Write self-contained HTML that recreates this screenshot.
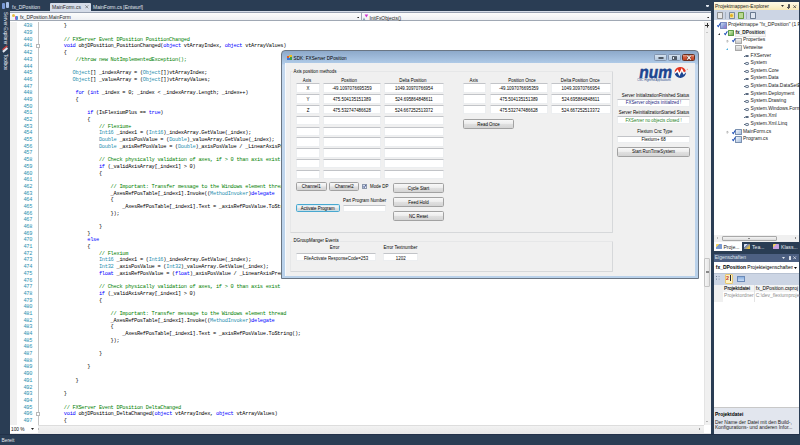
<!DOCTYPE html>
<html><head><meta charset="utf-8">
<style>
*{box-sizing:border-box;margin:0;padding:0}
html,body{width:800px;height:445px;overflow:hidden;background:#2a3d54;font-family:"Liberation Sans",sans-serif}
.a{position:absolute}
b{font-weight:normal}
.txt{white-space:pre;line-height:1}
/* editor */
#editor{left:10px;top:10.5px;width:700.5px;height:423.3px;background:#fff;overflow:hidden}
#code div,#nums div{height:6.70px}
#code{left:30.4px;top:12.9px;font-family:"Liberation Mono",monospace;font-size:5.3px;letter-spacing:-0.253px;line-height:6.70px;white-space:pre;color:#000}
#nums{left:3px;top:12.9px;width:19.2px;text-align:right;font-family:"Liberation Mono",monospace;font-size:5.3px;letter-spacing:-0.253px;line-height:6.70px;color:#2b91af}
.k{color:#0000ff}.t{color:#2b91af}.c{color:#008000}
/* dialog */
#dlg{left:281px;top:50px;width:417px;height:229.5px;background:linear-gradient(#8da9ca,#b0cbe8 12px,#b9d3ee);border:1px solid #6d7f95;border-radius:5px 5px 0 0}
#client{left:3px;top:12.5px;width:409px;height:213.5px;background:#f0f0f0;border:1px solid #9db3cc}
.tb{position:absolute;background:#fff;border:0.5px solid #eceef0;border-top:0.8px solid #c2c4c8;font-size:4.42px;text-align:center;white-space:pre;color:#000}
.lbl{position:absolute;font-size:4.42px;white-space:pre;line-height:5px;color:#000}
.btn{position:absolute;border:0.7px solid #a2a2a2;border-radius:1.6px;background:linear-gradient(#f8f8f8 0,#ededed 45%,#dfdfdf 55%,#d4d4d4 100%);padding-top:0.7px;font-size:4.42px;text-align:center;white-space:pre;color:#000}
.gb{position:absolute;border:0.5px solid #e6e7e8;border-right-color:#d6d8da;border-bottom-color:#d6d8da;border-radius:1px}
</style></head><body>
<!-- left sidebar -->
<div class="a txt" style="left:2.4px;top:12px;font-size:4.7px;color:#e8ecf4;writing-mode:vertical-rl">Server-Explorer</div>
<div class="a txt" style="left:2.4px;top:54px;font-size:4.7px;color:#e8ecf4;writing-mode:vertical-rl">Toolbox</div>
<div class="a" style="left:2px;top:3px;width:3px;height:6px;background:#7a9ad8;border-radius:1px"></div>
<div class="a" style="left:5.5px;top:2px;width:3px;height:6px;background:#a8c0e8;border-radius:1px"></div>
<div class="a" style="left:2px;top:47px;width:6px;height:2px;background:#c04040;transform:rotate(-40deg)"></div>
<div class="a" style="left:2px;top:49px;width:6px;height:1.5px;background:#e0e6f0;transform:rotate(-40deg)"></div>
<!-- tabs -->
<div class="a txt" style="left:12px;top:5px;font-size:5px;color:#e0e6ee">fx_DPosition</div>
<div class="a" style="left:50px;top:2.6px;width:41px;height:9px;background:#d5dce8;border-radius:1px 1px 0 0"></div>
<div class="a txt" style="left:52px;top:5px;font-size:5px;color:#2a2a2a">MainForm.cs</div>
<svg class="a" style="left:85.1px;top:5.3px" width="3.6" height="3.6" viewBox="0 0 3.6 3.6"><path d="M0.3 0.3 L3.3 3.3 M3.3 0.3 L0.3 3.3" stroke="#5a5a5a" stroke-width="0.6"/></svg>
<div class="a txt" style="left:93px;top:5px;font-size:5px;color:#e0e6ee">MainForm.cs [Entwurf]</div>
<svg class="a" style="left:705.70px;top:5.70px" width="3" height="1.8" viewBox="0 0 3 1.8"><path d="M0 0 L3 0 L1.5 1.8 Z" fill="#e0e6ee"/></svg><div class="a" style="left:705.7px;top:4.6px;width:3px;height:0.5px;background:#e0e6ee"></div>

<div id="editor" class="a">
  <div class="a" style="left:0;top:0;width:700.5px;height:1.5px;background:#d5dce8"></div>
  <div class="a" style="left:0;top:1.2px;width:700.5px;height:9.8px;background:linear-gradient(#fdfdfd,#eef0f3);border-top:1px solid #9aa3b3;border-bottom:1px solid #a0a8b4"></div>
  <div class="a" style="left:350.6px;top:1.5px;width:0.8px;height:9px;background:#a0a8b4"></div>
  <div class="a txt" style="left:10px;top:5.9px;font-size:4.9px;color:#1a1a1a">fx_DPosition.MainForm</div>
  <div class="a" style="left:2.3px;top:3.3px;width:3px;height:3px;background:#e8c040;border-radius:50%"></div>
  <div class="a" style="left:4.6px;top:5.3px;width:3.6px;height:4.2px;background:linear-gradient(90deg,#c050c0 50%,#4a8ad8 50%);border-radius:1px"></div>
  <svg class="a" style="left:346.60px;top:6.15px" width="2.6" height="1.5" viewBox="0 0 2.6 1.5"><path d="M0 0 L2.6 0 L1.3 1.5 Z" fill="#222"/></svg>
  <svg class="a" style="left:352px;top:3.2px" width="7" height="7" viewBox="0 0 7 7"><path d="M0.5 6.5 L2 3.5 L3.5 6.5 Z" fill="#8aa0b0"/><path d="M2.6 0.6 L6.2 0.6 L4.4 3.6 Z" fill="#d030d0"/></svg>
  <div class="a txt" style="left:359.4px;top:6.1px;font-size:4.9px;color:#1a1a1a">InitFxObjects()</div>
  <svg class="a" style="left:696.50px;top:6.15px" width="2.6" height="1.5" viewBox="0 0 2.6 1.5"><path d="M0 0 L2.6 0 L1.3 1.5 Z" fill="#222"/></svg>
  <!-- margins -->
  <div class="a" style="left:0;top:11px;width:6.5px;height:404px;background:#f0f0f0"></div>
  <div class="a" style="left:28px;top:11px;width:0.6px;height:403px;background:#c4c4c4"></div>
  <div class="a" style="left:26.2px;top:33.4px;width:4.2px;height:4.2px;border:0.6px solid #b8b8b8;background:#fff"></div>
  <div class="a" style="left:26.2px;top:401px;width:4.2px;height:4.2px;border:0.6px solid #b8b8b8;background:#fff"></div>
  <div id="nums" class="a"><div>438</div><div>439</div><div>440</div><div>441</div><div>442</div><div>443</div><div>444</div><div>445</div><div>446</div><div>447</div><div>448</div><div>449</div><div>450</div><div>451</div><div>452</div><div>453</div><div>454</div><div>455</div><div>456</div><div>457</div><div>458</div><div>459</div><div>460</div><div>461</div><div>462</div><div>463</div><div>464</div><div>465</div><div>466</div><div>467</div><div>468</div><div>469</div><div>470</div><div>471</div><div>472</div><div>473</div><div>474</div><div>475</div><div>476</div><div>477</div><div>478</div><div>479</div><div>480</div><div>481</div><div>482</div><div>483</div><div>484</div><div>485</div><div>486</div><div>487</div><div>488</div><div>489</div><div>490</div><div>491</div><div>492</div><div>493</div><div>494</div><div>495</div><div>496</div><div>497</div></div>
  <div id="code" class="a"><div>        }</div><div></div><div>        <b class=c>// FXServer Event DPosition PositionChanged</b></div><div>        <b class=k>void</b> objDPosition_PositionChanged(<b class=k>object</b> vtArrayIndex, <b class=k>object</b> vtArrayValues)</div><div>        {</div><div>            <b class=c>//throw new NotImplementedException();</b></div><div></div><div>           <b class=t>Object</b>[] _indexArray = (<b class=t>Object</b>[])vtArrayIndex;</div><div>           <b class=t>Object</b>[] _valueArray = (<b class=t>Object</b>[])vtArrayValues;</div><div></div><div>            <b class=k>for</b> (<b class=k>int</b> _index = 0; _index &lt; _indexArray.Length; _index++)</div><div>            {</div><div></div><div>                <b class=k>if</b> (IsFlexiumPlus == <b class=k>true</b>)</div><div>                {</div><div>                    <b class=c>// Flexium+</b></div><div>                    <b class=t>Int16</b> _index1 = (<b class=t>Int16</b>)_indexArray.GetValue(_index);</div><div>                    <b class=t>Double</b> _axisPosValue = (<b class=t>Double</b>)_valueArray.GetValue(_index);</div><div>                    <b class=t>Double</b> _axisRefPosValue = (<b class=t>Double</b>)_axisPosValue / _LinearAxisPrecision;</div><div></div><div>                    <b class=c>// Check physically validation of axes, if &gt; 0 than axis exist</b></div><div>                    <b class=k>if</b> (_validAxisArray[_index1] &gt; 0)</div><div>                    {</div><div></div><div>                        <b class=c>// Important: Transfer message to the Windows element thread</b></div><div>                        _AxesRefPosTable[_index1].Invoke((<b class=t>MethodInvoker</b>)<b class=k>delegate</b></div><div>                        {</div><div>                            _AxesRefPosTable[_index1].Text = _axisRefPosValue.ToString();</div><div>                        });</div><div></div><div>                    }</div><div>                }</div><div>                <b class=k>else</b></div><div>                {</div><div>                    <b class=c>// Flexium</b></div><div>                    <b class=t>Int16</b> _index1 = (<b class=t>Int16</b>)_indexArray.GetValue(_index);</div><div>                    <b class=t>Int32</b> _axisPosValue = (<b class=t>Int32</b>)_valueArray.GetValue(_index);</div><div>                    <b class=k>float</b> _axisRefPosValue = (<b class=k>float</b>)_axisPosValue / _LinearAxisPrecision;</div><div></div><div>                    <b class=c>// Check physically validation of axes, if &gt; 0 than axis exist</b></div><div>                    <b class=k>if</b> (_validAxisArray[_index1] &gt; 0)</div><div>                    {</div><div></div><div>                        <b class=c>// Important: Transfer message to the Windows element thread</b></div><div>                        _AxesRefPosTable[_index1].Invoke((<b class=t>MethodInvoker</b>)<b class=k>delegate</b></div><div>                        {</div><div>                            _AxesRefPosTable[_index1].Text = _axisRefPosValue.ToString();</div><div>                        });</div><div></div><div>                    }</div><div></div><div>                }</div><div></div><div>            }</div><div></div><div>        }</div><div></div><div>        <b class=c>// FXServer Event DPosition DeltaChanged</b></div><div>        <b class=k>void</b> objDPosition_DeltaChanged(<b class=k>object</b> vtArrayIndex, <b class=k>object</b> vtArrayValues)</div><div>        {</div></div>
  <!-- vscroll -->
  <div class="a" style="left:693.5px;top:11px;width:7px;height:404px;background:#f0f0f0;border-left:0.5px solid #e4e4e4"></div>
  <div class="a" style="left:695.2px;top:14.1px;width:4.2px;height:1px;background:#333"></div><div class="a" style="left:696.8px;top:12.2px;width:1px;height:4.6px;background:#333"></div><div class="a" style="left:696.6px;top:16.4px;width:1.4px;height:1.2px;background:#333;border-radius:50%"></div>
  <svg class="a" style="left:696.30px;top:21.60px" width="2" height="1.2" viewBox="0 0 2 1.2"><path d="M0 1.2 L2 1.2 L1.0 0 Z" fill="#8a8a8a"/></svg>
  <svg class="a" style="left:696.30px;top:410.00px" width="2" height="1.2" viewBox="0 0 2 1.2"><path d="M0 0 L2 0 L1.0 1.2 Z" fill="#8a8a8a"/></svg>
  <div class="a" style="left:694.4px;top:247.2px;width:5.8px;height:29.8px;background:linear-gradient(90deg,#f4f4f4,#e6e6e6);border:0.6px solid #c4c4c4;border-radius:1px"></div>
  <div class="a" style="left:695.8px;top:260.4px;width:3px;height:2.6px;border-top:0.5px solid #888;border-bottom:0.5px solid #888"></div>
  <!-- hscroll/zoom -->
  <div class="a" style="left:0;top:414.5px;width:700.5px;height:8.8px;background:linear-gradient(#f2f2f2,#e8e8e8);border-top:0.5px solid #ddd"></div>
  <div class="a" style="left:0;top:414.5px;width:28px;height:8px;background:#fff"></div>
  <div class="a txt" style="left:1px;top:417.2px;font-size:4.8px;color:#111">100 %</div>
  <svg class="a" style="left:21.10px;top:417.90px" width="3" height="2" viewBox="0 0 3 2"><path d="M0 0 L3 0 L1.5 2 Z" fill="#222"/></svg>
  <svg class="a" style="left:28.00px;top:417.60px" width="1.2" height="2" viewBox="0 0 1.2 2"><path d="M1.2 0 L1.2 2 L0 1.0 Z" fill="#666"/></svg>
  <div class="a" style="left:693.5px;top:414.5px;width:7px;height:8px;background:#fff"></div>
  <svg class="a" style="left:689.40px;top:417.60px" width="1.2" height="2" viewBox="0 0 1.2 2"><path d="M0 0 L0 2 L1.2 1.0 Z" fill="#666"/></svg>
</div>

<!-- Solution explorer -->
<div class="a" style="left:713.5px;top:2.4px;width:85.5px;height:238.2px;background:#fff">
  <div class="a" style="left:0;top:0;width:85.5px;height:7.8px;background:linear-gradient(#fffbe8,#f7e9b8)"></div>
  <div class="a txt" style="left:1.5px;top:1.6px;font-size:5px;color:#1a1a1a">Projektmappen-Explorer</div>
  <svg class="a" style="left:67.50px;top:3.10px" width="3" height="2" viewBox="0 0 3 2"><path d="M0 0 L3 0 L1.5 2 Z" fill="#333"/></svg>
  <div class="a" style="left:74px;top:1.9px;width:2px;height:3.4px;border:0.5px solid #555;border-radius:0.4px"></div><div class="a" style="left:73.3px;top:4.6px;width:3.4px;height:0.5px;background:#555"></div><div class="a" style="left:74.8px;top:5px;width:0.5px;height:1.4px;background:#555"></div>
  <svg class="a" style="left:79.90px;top:2.30px" width="3.4" height="3.4" viewBox="0 0 3.4 3.4"><path d="M0.3 0.3 L3.1 3.1 M3.1 0.3 L0.3 3.1" stroke="#333" stroke-width="0.7"/></svg>
  <div class="a" style="left:0;top:7.8px;width:85.5px;height:10.3px;background:#ccd5e4"></div>
  <div class="a" style="left:3.2px;top:10px;width:6px;height:6.2px;background:#e8e8e8;border:0.6px solid #909090;border-radius:0.8px"></div>
<div class="a" style="left:15.4px;top:10px;width:6px;height:6.2px;background:#f0e0a0;border:0.6px solid #7a8aa0;border-radius:0.8px"></div>
<div class="a" style="left:24.1px;top:10px;width:6px;height:6.2px;background:#b8d890;border:0.6px solid #6a9a40;border-radius:0.8px"></div>
<div class="a" style="left:36.3px;top:10px;width:6px;height:6.2px;background:#dfe6f0;border:0.6px solid #6a7a90;border-radius:0.8px"></div>
<div class="a" style="left:11.5px;top:9.6px;width:0.5px;height:7px;background:#a8b4c4"></div>
<div class="a" style="left:32.5px;top:9.6px;width:0.5px;height:7px;background:#a8b4c4"></div>
<div class="a" style="left:16.2px;top:11.5px;width:3px;height:3px;border-radius:50%;background:#e0b020"></div>
<div class="a txt" style="left:14.5px;top:20.9px;font-size:4.9px;color:#1a1a1a;">Projektmappe "fx_DPosition" (1 Projekt)</div>
<div class="a" style="left:6.7px;top:20.0px;width:6.6px;height:6.2px;background:linear-gradient(135deg,#c8d8f0,#8a9ad8 60%,#b070c0);border:0.4px solid #7a8ac0;border-radius:0.6px"></div>
<svg class="a" style="left:3.30px;top:20.80px;overflow:visible" width="3.6" height="4.0" viewBox="0 0 3.6 4"><path d="M0.3 2.3 L1.3 3.5 L3.4 0.3" fill="none" stroke="#1e4fb8" stroke-width="1.1"/></svg>
<div class="a" style="left:21.2px;top:27.4px;width:31px;height:7px;background:#f6f6f6;border:0.5px solid #e8e8e8"></div>
<div class="a txt" style="left:22px;top:28.5px;font-size:4.75px;color:#1a1a1a;font-weight:bold;">fx_DPosition</div>
<div class="a" style="left:14.2px;top:27.6px;width:6.6px;height:6.2px;background:linear-gradient(135deg,#d8f0c0,#70b050);border:0.4px solid #5a9a4a;border-radius:0.6px"></div>
<svg class="a" style="left:10.80px;top:28.40px;overflow:visible" width="3.6" height="4.0" viewBox="0 0 3.6 4"><path d="M0.3 2.3 L1.3 3.5 L3.4 0.3" fill="none" stroke="#1e4fb8" stroke-width="1.1"/></svg>
<svg class="a" style="left:4.40px;top:30.20px" width="2" height="2" viewBox="0 0 2 2"><path d="M2 0 L2 2 L0 2 Z" fill="#333"/></svg>
<div class="a txt" style="left:29.5px;top:36.1px;font-size:4.9px;color:#1a1a1a;">Properties</div>
<div class="a" style="left:21.7px;top:35.2px;width:6.6px;height:6.2px;background:linear-gradient(#f0f0f0,#c8c8c8);border:0.4px solid #a8a8a8;border-radius:0.6px"></div>
<svg class="a" style="left:18.30px;top:36.00px;overflow:visible" width="3.6" height="4.0" viewBox="0 0 3.6 4"><path d="M0.3 2.3 L1.3 3.5 L3.4 0.3" fill="none" stroke="#1e4fb8" stroke-width="1.1"/></svg>
<svg class="a" style="left:13.60px;top:37.40px;overflow:visible" width="1.4" height="2.4" viewBox="0 0 1.4 2.4"><path d="M0 0 L0 2.4 L1.4 1.2 Z" fill="none" stroke="#8a8a8a" stroke-width="0.5"/></svg>
<div class="a txt" style="left:29.5px;top:43.7px;font-size:4.9px;color:#1a1a1a;">Verweise</div>
<div class="a" style="left:21.7px;top:42.8px;width:6.6px;height:6.2px;background:linear-gradient(#f0f0f0,#c8c8c8);border:0.4px solid #a8a8a8;border-radius:0.6px"></div>
<svg class="a" style="left:12.90px;top:45.40px" width="2" height="2" viewBox="0 0 2 2"><path d="M2 0 L2 2 L0 2 Z" fill="#4ab0e0"/></svg>
<div class="a txt" style="left:37px;top:51.3px;font-size:4.9px;color:#1a1a1a;">FXServer</div>
<div class="a" style="left:31.8px;top:52.5px;width:4.2px;height:2.6px;border:0.6px solid #5a6a80;border-radius:1.2px;background:#dfe8f2"></div>
<div class="a" style="left:30.4px;top:53.5px;width:1.6px;height:0.6px;background:#5a6a80"></div>
<div class="a txt" style="left:37px;top:58.9px;font-size:4.9px;color:#1a1a1a;">System</div>
<div class="a" style="left:31.8px;top:60.1px;width:4.2px;height:2.6px;border:0.6px solid #5a6a80;border-radius:1.2px;background:#dfe8f2"></div>
<div class="a" style="left:30.4px;top:61.1px;width:1.6px;height:0.6px;background:#5a6a80"></div>
<div class="a txt" style="left:37px;top:66.5px;font-size:4.9px;color:#1a1a1a;">System.Core</div>
<div class="a" style="left:31.8px;top:67.7px;width:4.2px;height:2.6px;border:0.6px solid #5a6a80;border-radius:1.2px;background:#dfe8f2"></div>
<div class="a" style="left:30.4px;top:68.7px;width:1.6px;height:0.6px;background:#5a6a80"></div>
<div class="a txt" style="left:37px;top:74.1px;font-size:4.9px;color:#1a1a1a;">System.Data</div>
<div class="a" style="left:31.8px;top:75.3px;width:4.2px;height:2.6px;border:0.6px solid #5a6a80;border-radius:1.2px;background:#dfe8f2"></div>
<div class="a" style="left:30.4px;top:76.3px;width:1.6px;height:0.6px;background:#5a6a80"></div>
<div class="a txt" style="left:37px;top:81.7px;font-size:4.9px;color:#1a1a1a;">System.Data.DataSetExtensions</div>
<div class="a" style="left:31.8px;top:82.9px;width:4.2px;height:2.6px;border:0.6px solid #5a6a80;border-radius:1.2px;background:#dfe8f2"></div>
<div class="a" style="left:30.4px;top:83.9px;width:1.6px;height:0.6px;background:#5a6a80"></div>
<div class="a txt" style="left:37px;top:89.3px;font-size:4.9px;color:#1a1a1a;">System.Deployment</div>
<div class="a" style="left:31.8px;top:90.5px;width:4.2px;height:2.6px;border:0.6px solid #5a6a80;border-radius:1.2px;background:#dfe8f2"></div>
<div class="a" style="left:30.4px;top:91.5px;width:1.6px;height:0.6px;background:#5a6a80"></div>
<div class="a txt" style="left:37px;top:96.9px;font-size:4.9px;color:#1a1a1a;">System.Drawing</div>
<div class="a" style="left:31.8px;top:98.1px;width:4.2px;height:2.6px;border:0.6px solid #5a6a80;border-radius:1.2px;background:#dfe8f2"></div>
<div class="a" style="left:30.4px;top:99.1px;width:1.6px;height:0.6px;background:#5a6a80"></div>
<div class="a txt" style="left:37px;top:104.5px;font-size:4.9px;color:#1a1a1a;">System.Windows.Forms</div>
<div class="a" style="left:31.8px;top:105.7px;width:4.2px;height:2.6px;border:0.6px solid #5a6a80;border-radius:1.2px;background:#dfe8f2"></div>
<div class="a" style="left:30.4px;top:106.7px;width:1.6px;height:0.6px;background:#5a6a80"></div>
<div class="a txt" style="left:37px;top:112.1px;font-size:4.9px;color:#1a1a1a;">System.Xml</div>
<div class="a" style="left:31.8px;top:113.3px;width:4.2px;height:2.6px;border:0.6px solid #5a6a80;border-radius:1.2px;background:#dfe8f2"></div>
<div class="a" style="left:30.4px;top:114.3px;width:1.6px;height:0.6px;background:#5a6a80"></div>
<div class="a txt" style="left:37px;top:119.7px;font-size:4.9px;color:#1a1a1a;">System.Xml.Linq</div>
<div class="a" style="left:31.8px;top:120.9px;width:4.2px;height:2.6px;border:0.6px solid #5a6a80;border-radius:1.2px;background:#dfe8f2"></div>
<div class="a" style="left:30.4px;top:121.9px;width:1.6px;height:0.6px;background:#5a6a80"></div>
<div class="a txt" style="left:29.5px;top:127.3px;font-size:4.9px;color:#1a1a1a;">MainForm.cs</div>
<div class="a" style="left:21.7px;top:126.4px;width:6.6px;height:6.2px;background:linear-gradient(135deg,#f0f4fa,#a8c0e0);border:0.4px solid #7a90b0;border-radius:0.6px"></div>
<svg class="a" style="left:18.30px;top:127.20px;overflow:visible" width="3.6" height="4.0" viewBox="0 0 3.6 4"><path d="M0.3 2.3 L1.3 3.5 L3.4 0.3" fill="none" stroke="#1e4fb8" stroke-width="1.1"/></svg>
<svg class="a" style="left:13.60px;top:128.60px;overflow:visible" width="1.4" height="2.4" viewBox="0 0 1.4 2.4"><path d="M0 0 L0 2.4 L1.4 1.2 Z" fill="none" stroke="#8a8a8a" stroke-width="0.5"/></svg>
<div class="a txt" style="left:29.5px;top:134.9px;font-size:4.9px;color:#1a1a1a;">Program.cs</div>
<div class="a" style="left:21.7px;top:134.0px;width:6.6px;height:6.2px;background:linear-gradient(135deg,#f0f4fa,#a8c0e0);border:0.4px solid #7a90b0;border-radius:0.6px"></div>
<svg class="a" style="left:18.30px;top:134.80px;overflow:visible" width="3.6" height="4.0" viewBox="0 0 3.6 4"><path d="M0.3 2.3 L1.3 3.5 L3.4 0.3" fill="none" stroke="#1e4fb8" stroke-width="1.1"/></svg>
  <div class="a" style="left:0;top:232.9px;width:85.5px;height:6.5px;background:#f0f0f0"></div>
  <div class="a" style="left:8.1px;top:233.5px;width:55.2px;height:5.2px;background:linear-gradient(#f4f4f4,#dcdcdc);border:0.5px solid #a8a8a8;border-radius:1px"></div>
  <div class="a" style="left:34px;top:235.2px;width:2.4px;height:1.8px;border-left:0.4px solid #888;border-right:0.4px solid #888"></div>
  <svg class="a" style="left:3.00px;top:235.10px" width="1.2" height="2" viewBox="0 0 1.2 2"><path d="M1.2 0 L1.2 2 L0 1.0 Z" fill="#555"/></svg>
  <svg class="a" style="left:81.20px;top:235.10px" width="1.2" height="2" viewBox="0 0 1.2 2"><path d="M0 0 L0 2 L1.2 1.0 Z" fill="#555"/></svg>
</div>
<!-- tool tabs -->
<div class="a" style="left:714px;top:241.6px;width:27.8px;height:9.6px;background:#fff"></div>
<div class="a txt" style="left:723.4px;top:244.6px;font-size:5.1px;color:#1a1a1a">Proje...</div>
<div class="a" style="left:715.6px;top:243.6px;width:6px;height:5px;background:linear-gradient(135deg,#f0d060 30%,#7a9ad0 30%);border-radius:0.5px"></div>
<div class="a txt" style="left:752px;top:244.6px;font-size:5.1px;color:#e8ecf2">Tea...</div>
<div class="a" style="left:744.2px;top:243.6px;width:6px;height:5.6px;background:linear-gradient(135deg,#d8e0f0 30%,#5a7acc 30%,#e8c040 80%);border-radius:0.5px"></div>
<div class="a txt" style="left:781px;top:244.6px;font-size:5.1px;color:#e8ecf2">Klass...</div>
<div class="a" style="left:773.4px;top:243.6px;width:6px;height:5px;background:linear-gradient(135deg,#f0d060 30%,#c8a0e0 30%);border-radius:0.5px"></div>
<!-- Properties -->
<div class="a" style="left:713.5px;top:254.3px;width:85.5px;height:179.4px;background:#fff">
  <div class="a" style="left:0;top:0;width:85.5px;height:7.4px;background:#4d6082"></div>
  <div class="a txt" style="left:1.3px;top:1.4px;font-size:4.95px;color:#dfe4ec">Eigenschaften</div>
  <svg class="a" style="left:68.00px;top:2.90px" width="3" height="2" viewBox="0 0 3 2"><path d="M0 0 L3 0 L1.5 2 Z" fill="#e6eaf0"/></svg>
  <div class="a" style="left:75.8px;top:1.8px;width:1.8px;height:3.6px;border:0.5px solid #dfe4ec;border-radius:0.5px"></div>
  <svg class="a" style="left:79.90px;top:2.20px" width="3.4" height="3.4" viewBox="0 0 3.4 3.4"><path d="M0.3 0.3 L3.1 3.1 M3.1 0.3 L0.3 3.1" stroke="#e6eaf0" stroke-width="0.7"/></svg>
  <div class="a txt" style="left:2.3px;top:11.6px;font-size:4.95px;color:#000"><b style="font-weight:bold">fx_DPosition</b> Projekteigenschaften</div>
  <div class="a" style="left:79.5px;top:10.6px;width:6px;height:7px;background:#fff"></div>
  <svg class="a" style="left:80.30px;top:13.20px" width="3" height="2" viewBox="0 0 3 2"><path d="M0 0 L3 0 L1.5 2 Z" fill="#000"/></svg>
  <div class="a" style="left:0;top:18.6px;width:85.5px;height:11.7px;background:#ccd5e4;border-top:0.5px solid #b8c2d2"></div>
  <div class="a" style="left:2.8px;top:21.5px;width:1.2px;height:1.2px;background:#6a7a90;box-shadow:0 2.6px 0 #6a7a90,2.6px 0 0 #8a9ab0,2.6px 2.6px 0 #8a9ab0"></div>
  <div class="a" style="left:11.2px;top:19.8px;width:8.6px;height:9.6px;background:#fdf2c4;border:0.6px solid #e8c870;border-radius:1px"></div>
  <div class="a txt" style="left:12.6px;top:21.4px;font-size:5.4px;color:#c03030;font-weight:bold">2</div>
  <div class="a" style="left:16.4px;top:21.2px;width:0.8px;height:6px;background:#2a2a2a"></div>
  <div class="a" style="left:23.6px;top:21.6px;width:8px;height:6.4px;background:linear-gradient(#8ab0e0,#c8dcf4);border:0.6px solid #6a8ab8"></div>
  <div class="a" style="left:0;top:30.3px;width:9.5px;height:17px;background:#f0f0f0"></div>
  <div class="a" style="left:9.5px;top:30.3px;width:76px;height:7.4px;background:#f4f4f4"></div>
  <div class="a txt" style="left:10.6px;top:32.4px;font-size:4.95px;color:#1a1a1a;-webkit-text-stroke:0.15px #1a1a1a">Projektdatei</div>
  <div class="a txt" style="left:10.6px;top:40.1px;font-size:4.95px;color:#8c8c8c">Projektordner</div>
  <div class="a txt" style="left:42.3px;top:32.4px;font-size:4.95px;color:#000">fx_DPosition.csproj</div>
  <div class="a txt" style="left:42.3px;top:40.1px;font-size:4.95px;color:#8c8c8c">C:\dev_flexiumproject</div>
  <div class="a" style="left:40.6px;top:30.3px;width:0.5px;height:17px;background:#e4e4e4"></div>
  <div class="a" style="left:0;top:153.2px;width:85.5px;height:26.2px;background:#e2e6ee;border-top:1.3px solid #c8c8c8"></div>
  <div class="a txt" style="left:1.5px;top:158.4px;font-size:4.95px;color:#000;font-weight:bold">Projektdatei</div>
  <div class="a txt" style="left:1.5px;top:166.4px;font-size:4.95px;color:#222">Der Name der Datei mit den Build-,</div>
  <div class="a txt" style="left:1.5px;top:172.2px;font-size:4.95px;color:#222">Konfigurations- und anderen Infor...</div>
</div>
<div class="a" style="left:0;top:433.8px;width:800px;height:1.2px;background:#223149"></div>
<div class="a txt" style="left:1.5px;top:438.6px;font-size:4.9px;color:#e6eaf0">Bereit</div>

<div class="a" style="left:281px;top:50.2px;width:418px;height:229px;background:linear-gradient(#8da9ca,#b0cbe8 12.5px,#c4d8ee 14px,#b9d1ea);border:0.7px solid #6a7684;border-radius:4px 4px 0 0"></div>
<div class="a" style="left:284.8px;top:62.6px;width:410.4px;height:213.3px;background:#f0f0f0;border-left:0.5px solid #f8fafc"></div>
<div class="a" style="left:287px;top:55.5px;width:2.2px;height:2.2px;background:#e05a2a"></div><div class="a" style="left:289.4px;top:55px;width:2.2px;height:2.2px;background:#f0c020"></div><div class="a" style="left:287.4px;top:57.8px;width:2.2px;height:2.2px;background:#3a7ad8"></div><div class="a" style="left:289.6px;top:57.4px;width:2.2px;height:2.2px;background:#40a040"></div>
<div class="lbl" style="left:293.6px;top:55.80px;font-size:4.68px;color:#000">SDK: FXServer DPosition</div>
<div class="a" style="left:654.4px;top:54.4px;width:13.00px;height:6.90px;background:linear-gradient(#d4e2f0,#b4c8de);border:0.6px solid #8294ae;border-radius:1.5px"></div>
<div class="a" style="left:668.2px;top:54.4px;width:12.80px;height:6.90px;background:linear-gradient(#d4e2f0,#b4c8de);border:0.6px solid #8294ae;border-radius:1.5px"></div>
<div class="a" style="left:681.8px;top:54.4px;width:13.20px;height:6.90px;background:linear-gradient(#e8a08a,#d0583a 50%,#c0401e);border:0.6px solid #6a3020;border-radius:1.5px"></div>
<div class="a" style="left:658.3px;top:57px;width:5.6px;height:2.4px;border:0.7px solid #505a66;background:#fff;border-radius:1.2px"></div>
<div class="a" style="left:672.2px;top:56.1px;width:2.6px;height:3.6px;border:0.7px solid #505a66;background:#e8eef4;border-radius:0.6px"></div>
<div class="a" style="left:674.6px;top:56.1px;width:2.6px;height:3.6px;border:0.7px solid #505a66;background:#e8eef4;border-radius:0.6px"></div>
<svg class="a" style="left:685.5px;top:55.3px" width="6" height="5.4" viewBox="0 0 6 5.4"><path d="M1.2 0.7 L4.8 4.7 M4.8 0.7 L1.2 4.7" stroke="#4a2a20" stroke-width="1.9"/><path d="M1.2 0.7 L4.8 4.7 M4.8 0.7 L1.2 4.7" stroke="#fff" stroke-width="1.1"/></svg>
<div class="gb" style="left:289.8px;top:71px;width:323.50px;height:162.30px;"></div>
<div class="a" style="left:292.5px;top:68.8px;width:43.50px;height:4.70px;background:#f0f0f0"></div>
<div class="lbl" style="left:293.5px;top:68.60px;">Axis position methods</div>
<div class="gb" style="left:289.8px;top:240.6px;width:323.50px;height:31.00px;"></div>
<div class="a" style="left:292.5px;top:238.6px;width:47.50px;height:4.90px;background:#f0f0f0"></div>
<div class="lbl" style="left:293.6px;top:238.30px;">DGroupManger Events</div>
<div class="lbl" style="left:207px;width:200px;text-align:center;top:77.50px;">Axis</div>
<div class="lbl" style="left:249px;width:200px;text-align:center;top:77.50px;">Position</div>
<div class="lbl" style="left:312.8px;width:200px;text-align:center;top:77.50px;">Delta Position</div>
<div class="tb" style="left:296.2px;top:83.4px;width:23.60px;height:9.40px;line-height:8.10px;padding-top:0.7px;">X</div>
<div class="tb" style="left:322.6px;top:83.4px;width:58.60px;height:9.40px;line-height:8.10px;padding-top:0.7px;">-49.1097076695359</div>
<div class="tb" style="left:384.2px;top:83.4px;width:59.60px;height:9.40px;line-height:8.10px;padding-top:0.7px;">1049.30970766954</div>
<div class="tb" style="left:296.2px;top:94.2px;width:23.60px;height:9.40px;line-height:8.10px;padding-top:0.7px;">Y</div>
<div class="tb" style="left:322.6px;top:94.2px;width:58.60px;height:9.40px;line-height:8.10px;padding-top:0.7px;">475.504135151389</div>
<div class="tb" style="left:384.2px;top:94.2px;width:59.60px;height:9.40px;line-height:8.10px;padding-top:0.7px;">524.695864848611</div>
<div class="tb" style="left:296.2px;top:105.0px;width:23.60px;height:9.40px;line-height:8.10px;padding-top:0.7px;">Z</div>
<div class="tb" style="left:322.6px;top:105.0px;width:58.60px;height:9.40px;line-height:8.10px;padding-top:0.7px;">475.532747486628</div>
<div class="tb" style="left:384.2px;top:105.0px;width:59.60px;height:9.40px;line-height:8.10px;padding-top:0.7px;">524.667252513372</div>
<div class="tb" style="left:296.2px;top:115.80000000000001px;width:23.60px;height:9.40px;line-height:8.10px;padding-top:0.7px;"></div>
<div class="tb" style="left:322.6px;top:115.80000000000001px;width:58.60px;height:9.40px;line-height:8.10px;padding-top:0.7px;"></div>
<div class="tb" style="left:384.2px;top:115.80000000000001px;width:59.60px;height:9.40px;line-height:8.10px;padding-top:0.7px;"></div>
<div class="tb" style="left:296.2px;top:126.60000000000001px;width:23.60px;height:9.40px;line-height:8.10px;padding-top:0.7px;"></div>
<div class="tb" style="left:322.6px;top:126.60000000000001px;width:58.60px;height:9.40px;line-height:8.10px;padding-top:0.7px;"></div>
<div class="tb" style="left:384.2px;top:126.60000000000001px;width:59.60px;height:9.40px;line-height:8.10px;padding-top:0.7px;"></div>
<div class="tb" style="left:296.2px;top:137.4px;width:23.60px;height:9.40px;line-height:8.10px;padding-top:0.7px;"></div>
<div class="tb" style="left:322.6px;top:137.4px;width:58.60px;height:9.40px;line-height:8.10px;padding-top:0.7px;"></div>
<div class="tb" style="left:384.2px;top:137.4px;width:59.60px;height:9.40px;line-height:8.10px;padding-top:0.7px;"></div>
<div class="tb" style="left:296.2px;top:148.20000000000002px;width:23.60px;height:9.40px;line-height:8.10px;padding-top:0.7px;"></div>
<div class="tb" style="left:322.6px;top:148.20000000000002px;width:58.60px;height:9.40px;line-height:8.10px;padding-top:0.7px;"></div>
<div class="tb" style="left:384.2px;top:148.20000000000002px;width:59.60px;height:9.40px;line-height:8.10px;padding-top:0.7px;"></div>
<div class="tb" style="left:296.2px;top:159.0px;width:23.60px;height:9.40px;line-height:8.10px;padding-top:0.7px;"></div>
<div class="tb" style="left:322.6px;top:159.0px;width:58.60px;height:9.40px;line-height:8.10px;padding-top:0.7px;"></div>
<div class="tb" style="left:384.2px;top:159.0px;width:59.60px;height:9.40px;line-height:8.10px;padding-top:0.7px;"></div>
<div class="tb" style="left:296.2px;top:169.8px;width:23.60px;height:9.40px;line-height:8.10px;padding-top:0.7px;"></div>
<div class="tb" style="left:322.6px;top:169.8px;width:58.60px;height:9.40px;line-height:8.10px;padding-top:0.7px;"></div>
<div class="tb" style="left:384.2px;top:169.8px;width:59.60px;height:9.40px;line-height:8.10px;padding-top:0.7px;"></div>
<div class="lbl" style="left:373.7px;width:200px;text-align:center;top:77.50px;">Axis</div>
<div class="lbl" style="left:422px;width:200px;text-align:center;top:77.50px;">Position Once</div>
<div class="lbl" style="left:480.29999999999995px;width:200px;text-align:center;top:77.50px;">Delta Position Once</div>
<div class="tb" style="left:463.4px;top:83.4px;width:23.00px;height:9.40px;line-height:8.10px;padding-top:0.7px;"></div>
<div class="tb" style="left:489.6px;top:83.4px;width:58.40px;height:9.40px;line-height:8.10px;padding-top:0.7px;">-49.1097076695359</div>
<div class="tb" style="left:550.6px;top:83.4px;width:60.00px;height:9.40px;line-height:8.10px;padding-top:0.7px;">1049.30970766954</div>
<div class="tb" style="left:463.4px;top:94.2px;width:23.00px;height:9.40px;line-height:8.10px;padding-top:0.7px;"></div>
<div class="tb" style="left:489.6px;top:94.2px;width:58.40px;height:9.40px;line-height:8.10px;padding-top:0.7px;">475.504135151389</div>
<div class="tb" style="left:550.6px;top:94.2px;width:60.00px;height:9.40px;line-height:8.10px;padding-top:0.7px;">524.695864848611</div>
<div class="tb" style="left:463.4px;top:105.0px;width:23.00px;height:9.40px;line-height:8.10px;padding-top:0.7px;"></div>
<div class="tb" style="left:489.6px;top:105.0px;width:58.40px;height:9.40px;line-height:8.10px;padding-top:0.7px;">475.532747486628</div>
<div class="tb" style="left:550.6px;top:105.0px;width:60.00px;height:9.40px;line-height:8.10px;padding-top:0.7px;">524.667252513372</div>
<div class="btn" style="left:463.4px;top:119.4px;width:50.20px;height:9.20px;line-height:7.80px;">Read Once</div>
<div class="btn" style="left:296px;top:182.4px;width:30.60px;height:8.20px;line-height:6.80px;">Channel1</div>
<div class="btn" style="left:329px;top:182.4px;width:30.40px;height:8.20px;line-height:6.80px;">Channel2</div>
<div class="a" style="left:362.2px;top:184.3px;width:5.00px;height:4.80px;background:linear-gradient(135deg,#c8d4e8,#f4f6fa);border:0.6px solid #8e9aae"></div>
<svg class="a" style="left:362.2px;top:184.3px" width="5" height="4.8" viewBox="0 0 5 4.8"><path d="M1.2 2.4 L2.2 3.6 L3.9 1.0" fill="none" stroke="#2a3a7a" stroke-width="0.8"/></svg>
<div class="lbl" style="left:370px;top:183.90px;">Mode DP</div>
<div class="btn" style="left:393px;top:183.4px;width:51.00px;height:10.00px;line-height:8.60px;">Cycle Start</div>
<div class="btn" style="left:393px;top:197.4px;width:51.00px;height:10.00px;line-height:8.60px;">Feed Hold</div>
<div class="btn" style="left:393px;top:211.4px;width:51.00px;height:10.00px;line-height:8.60px;">NC Reset</div>
<div class="lbl" style="left:343px;top:197.90px;">Part Program Number</div>
<div class="tb" style="left:342.6px;top:204.6px;width:43.40px;height:7.40px;line-height:6.10px;padding-top:0.7px;"></div>
<div class="btn" style="left:296px;top:204px;width:43.50px;height:8.20px;line-height:6.80px;border:0.9px solid #48a8d0;box-shadow:inset 0 0 0 0.4px #b8e4f4">Activate Program</div>
<div class="lbl" style="left:234.60000000000002px;width:200px;text-align:center;top:245.30px;">Error</div>
<div class="lbl" style="left:300.5px;width:200px;text-align:center;top:245.30px;">Error Textnumber</div>
<div class="tb" style="left:295.8px;top:253px;width:80.50px;height:8.40px;line-height:7.10px;padding-top:0.7px;">FileActivate ResponseCode=253</div>
<div class="tb" style="left:383px;top:253px;width:35.40px;height:8.40px;line-height:7.10px;padding-top:0.7px;">1202</div>
<div class="lbl" style="left:555.5px;width:200px;text-align:center;top:92.50px;">Server InitializationFinished Status</div>
<div class="tb" style="left:616.8px;top:98.8px;width:73.50px;height:8.20px;line-height:6.90px;padding-top:0.7px;color:#22227e">FXServer objects initialized !</div>
<div class="lbl" style="left:554px;width:200px;text-align:center;top:109.90px;">Server ReinitializationStarted Status</div>
<div class="tb" style="left:616.8px;top:116.4px;width:73.50px;height:7.90px;line-height:6.60px;padding-top:0.7px;color:#1f7f1f">FXServer no objects closed !</div>
<div class="lbl" style="left:554.9px;width:200px;text-align:center;top:129.20px;">Flexium Cnc Type</div>
<div class="tb" style="left:616.8px;top:135.7px;width:73.50px;height:7.70px;line-height:6.40px;padding-top:0.7px;">Flexium+ 68</div>
<div class="btn" style="left:616.8px;top:146.5px;width:73.50px;height:10.10px;line-height:8.70px;">Start RunTimeSystem</div>
<svg class="a" style="left:632px;top:62px" width="60" height="24" viewBox="0 0 60 24">
<text x="6.6" y="16.1" font-family="Liberation Sans" font-weight="bold" font-size="17" fill="#1d4590" stroke="#1d4590" stroke-width="0.5" textLength="33" lengthAdjust="spacingAndGlyphs" transform="skewX(-9) translate(2.4,0)">num</text>
<path d="M42.6 10.8 A5.7 5.5 0 0 1 54.0 10.0 Z" fill="#e2321e"/>
<path d="M42.6 10.8 A5.7 5.5 0 0 0 54.0 10.0 Z" fill="#1d4590"/>
<path d="M43 11.2 L45.6 8.4 L47.4 12.6 L49.8 7.6 L51.8 11.6 L53.8 9.6" fill="none" stroke="#fff" stroke-width="1.3"/>
<circle cx="55.2" cy="7.2" r="0.45" fill="#e2321e"/>
<text x="5.2" y="19.3" font-family="Liberation Sans" font-style="italic" font-size="2.8" fill="#2a4a8a" textLength="33.8" lengthAdjust="spacingAndGlyphs">CNC Highend Applications</text>
</svg>
</body></html>
